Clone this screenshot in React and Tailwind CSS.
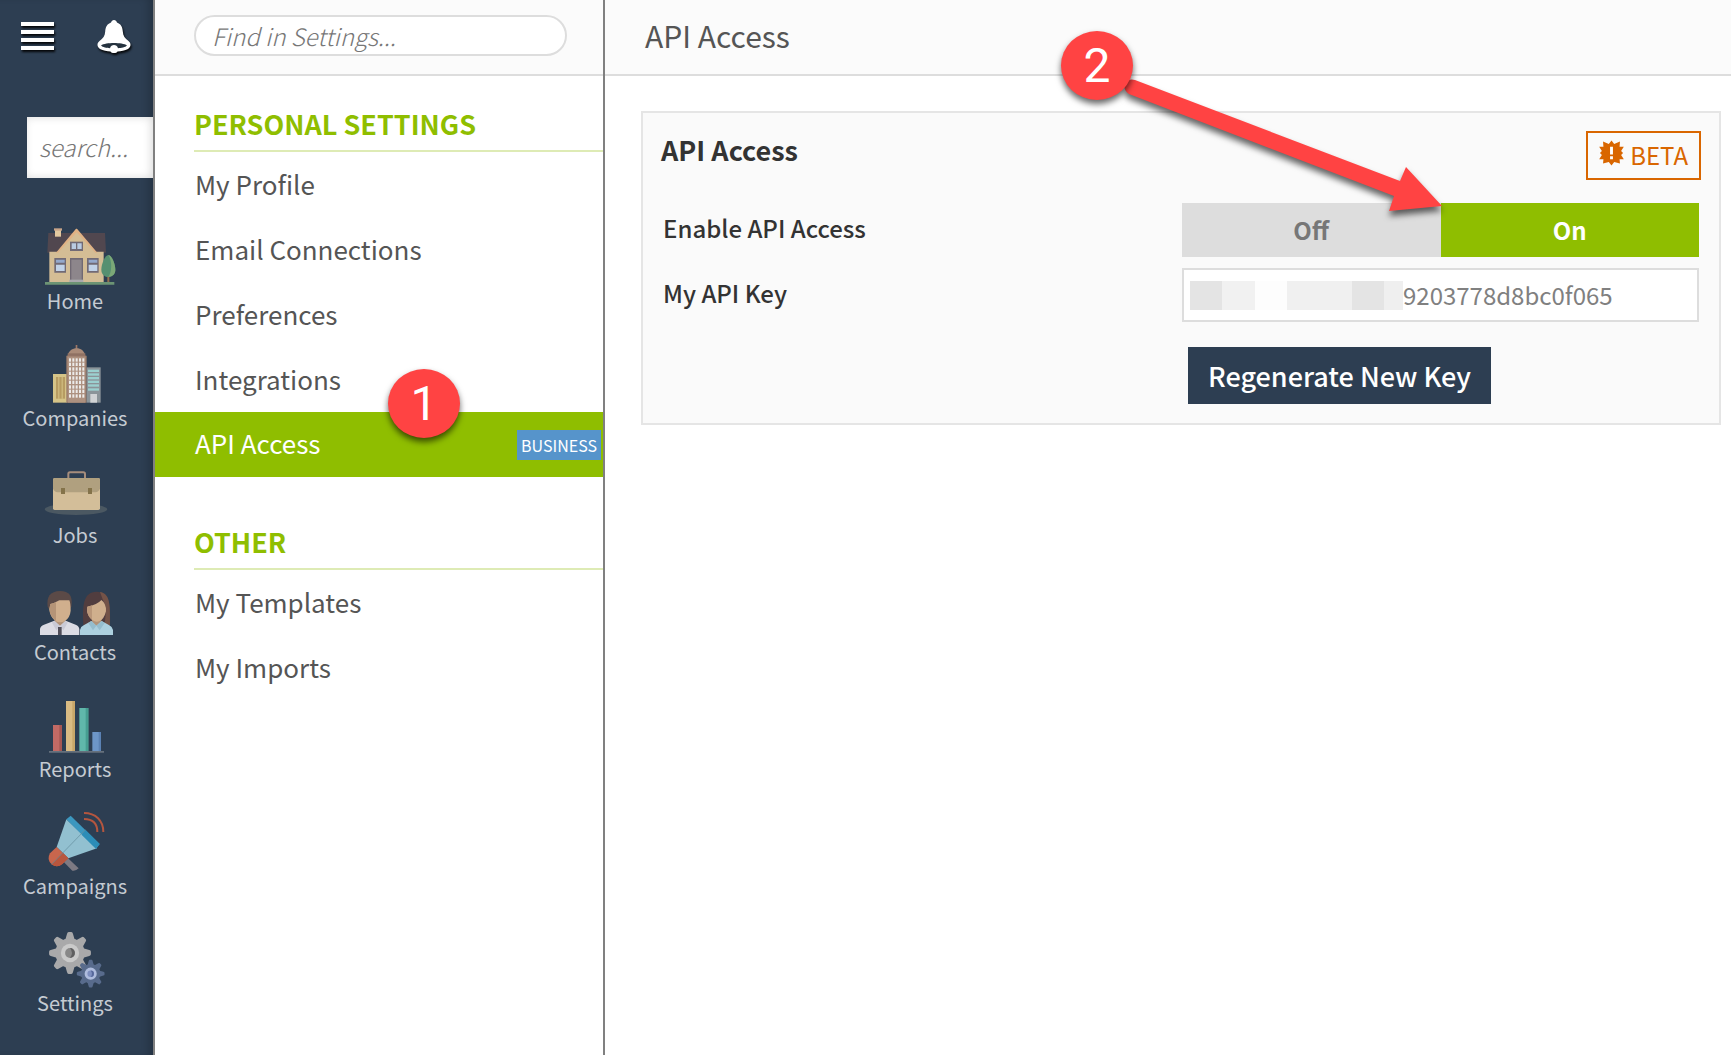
import React from "react";

const nav = [
  { label: "Home", icon: HomeIcon },
  { label: "Companies", icon: CompaniesIcon },
  { label: "Jobs", icon: JobsIcon },
  { label: "Contacts", icon: ContactsIcon },
  { label: "Reports", icon: ReportsIcon },
  { label: "Campaigns", icon: CampaignsIcon },
  { label: "Settings", icon: SettingsIcon },
];

function HomeIcon() {
  return (
    <svg viewBox="99 69 252 192" className="h-16 w-[84px]" aria-hidden="true">
      <path d="M145 99H315L318 158H142Z" fill="#51474f" />
      <path d="M148 155L174 155L230 90L286 155H311V247H148Z" fill="#d4bd95" />
      <path d="M174 158L230 97L286 158H292L231 86H228L168 158Z" fill="#e0b184" />
      <path d="M165 88H183V110H165Z" fill="#e3c9a0" />
      <path d="M162 85H186V92H162Z" fill="#c9a589" />
      <path d="M210 125H249V153H210Z" fill="#716a75" />
      <path d="M215 130H228V147H215ZM232 130H245V147H232Z" fill="#b9cbe2" />
      <path d="M210 174H249V241H210Z" fill="#706973" />
      <path d="M214 179H245V241H214Z" fill="#8d868b" />
      <path d="M163 174H198V218H163ZM261 174H296V218H261Z" fill="#716a75" />
      <path d="M168 179H194V188H168ZM266 179H292V188H266Z" fill="#94a8cb" />
      <path d="M168 194H194V213H168ZM266 194H292V213H266Z" fill="#c1d2e8" />
      <path d="M208 239H250V247H208Z" fill="#a9a9ad" />
      <path d="M322 225H328V250H322Z" fill="#97704f" />
      <path d="M325 165C336 165 347 195 346 211C345 225 335 231 325 231C315 231 304 224 304 209C304 193 315 165 325 165Z" fill="#569071" />
      <path d="M325 165C336 165 347 195 346 211C345 225 335 231 325 231C335 218 338 185 325 165Z" fill="#7ba877" />
      <path d="M135 246H343V254H135Z" fill="#6c9474" />
    </svg>
  );
}

function CompaniesIcon() {
  const rows = [475, 488, 502, 515, 529, 542, 556, 569, 583];
  const cols = [207, 217, 227, 237, 247];
  return (
    <svg viewBox="99 420 252 192" className="h-16 w-[84px]" aria-hidden="true">
      <path d="M159 522H201V608H159Z" fill="#d5c488" />
      <path d="M168 531H195V596H168Z" fill="#b79c62" />
      <path d="M175 531H178V596H175ZM185 531H188V596H185Z" fill="#d5c488" />
      <path d="M227 435H232V448H227Z" fill="#9d7868" />
      <path d="M203 468C205 452 218 445 230 445C242 445 253 452 256 468Z" fill="#a98a78" />
      <path d="M203 460H256V468H203Z" fill="#8f7163" />
      <path d="M199 467H260V608H199Z" fill="#9b7d6c" />
      <path d="M203 470H256V608H203Z" fill="#ad9180" />
      {rows.map((y) => cols.map((x) => <rect key={`${x}-${y}`} x={x} y={y} width="6" height="10" fill="#ecebe9" />))}
      <path d="M260 502H302V608H260Z" fill="#8b9499" />
      {[509, 520, 531, 542, 553, 565].map((y) => (
        <rect key={y} x="264" y={y} width="33" height="7" fill="#9bd0cf" />
      ))}
      <path d="M271 582H291V608H271Z" fill="#d1d3d5" />
    </svg>
  );
}

function JobsIcon() {
  return (
    <svg viewBox="99 51 252 192" className="h-16 w-[84px]" aria-hidden="true">
      <ellipse cx="228" cy="208" rx="94" ry="17" fill="#4b5862" />
      <path d="M205 117V102Q205 97 210 97H250Q255 97 255 102V117" fill="none" stroke="#a68d7c" strokeWidth="6" />
      <rect x="159" y="114" width="141" height="96" rx="5" fill="#d3be99" />
      <path d="M164 114H295Q300 114 300 119V145Q297 156 286 157H173Q162 156 159 145V119Q159 114 164 114Z" fill="#b0a07f" />
      <path d="M183 144H195V162H183ZM264 144H276V162H264Z" fill="#84734a" />
    </svg>
  );
}

function ContactsIcon() {
  return (
    <svg viewBox="99 402 252 192" className="h-16 w-[84px]" aria-hidden="true">
      <path d="M143 500C139 470 150 454 180 453C208 453 219 468 214 500L207 512H150Z" fill="#5b4a47" />
      <path d="M164 528H196V560L180 568L164 558Z" fill="#b1937a" />
      <path d="M151 492Q165 489 178 481H208Q212 490 212 512Q210 532 196 542Q180 551 165 542Q150 530 148 508Z" fill="#d0af8d" />
      <path d="M151 492Q160 490 168 486V543Q150 530 148 508Z" fill="#b59477" />
      <path d="M120 585V567Q121 558 132 554L163 542L180 558L197 542L227 554Q237 558 238 567V585Z" fill="#dcdce4" />
      <path d="M163 542L180 558L169 571L156 548ZM197 542L180 558L190 571L203 548Z" fill="#c9cad6" />
      <path d="M174 561H185V585H174Z" fill="#504e59" />
      <path d="M250 555C247 500 248 455 290 455C329 456 331 490 330 555Z" fill="#513d3f" />
      <path d="M300 456C329 460 331 490 330 555H314Q322 500 308 478Z" fill="#745348" />
      <path d="M276 528H304V560H276Z" fill="#b1937a" />
      <path d="M262 500Q292 494 304 480Q319 490 318 514Q312 538 299 543Q288 548 278 541Q263 528 261 512Z" fill="#d0af8d" />
      <path d="M262 500Q270 499 276 496V540Q263 528 261 512Z" fill="#ba977a" />
      <path d="M240 585V570Q242 560 251 556L274 543L289 557L305 543L328 556Q338 561 339 570V585Z" fill="#acd0df" />
      <path d="M274 543L289 557L279 571L265 549ZM305 543L289 557L299 571L314 549Z" fill="#95bdce" />
    </svg>
  );
}

function ReportsIcon() {
  return (
    <svg viewBox="99 33 252 192" className="h-16 w-[84px]" aria-hidden="true">
      <path d="M159 135H186V213H159Z" fill="#c26a65" />
      <path d="M178 135H186V213H178Z" fill="#a65752" />
      <path d="M198 63H225V213H198Z" fill="#d9bb83" />
      <path d="M217 63H225V213H217Z" fill="#c8a669" />
      <path d="M238 84H265V213H238Z" fill="#60b7ab" />
      <path d="M257 84H265V213H257Z" fill="#469d91" />
      <path d="M277 156H303V213H277Z" fill="#6d96c8" />
      <path d="M296 156H303V213H296Z" fill="#5b82b4" />
      <path d="M147 213H312V218H147Z" fill="#66717d" />
    </svg>
  );
}

function CampaignsIcon() {
  return (
    <svg viewBox="99 384 252 192" className="h-16 w-[84px]" aria-hidden="true">
      <path d="M192 547L204 535L236 565Q228 574 217 572Z" fill="#7d7a83" />
      <path d="M199 418L291 505L205 535L170 501Z" fill="#92c0d0" />
      <path d="M199 418L212 407L299 492L288 506Z" fill="#3c97bf" />
      <path d="M250 458L257 450L299 492L288 506L245 464Z" fill="#2c8db7" />
      <path d="M170 501L205 535L187 552Q171 565 155 553Q139 539 150 520Z" fill="#c8664d" />
      <path d="M188 518L205 535L187 552Q171 565 155 553Z" fill="#b9563d" />
      <path d="M155 553L256 449" stroke="#618b9a" strokeWidth="2" />
      <path d="M252 399C287 399 310 422 310 456M252 417C278 417 292 431 292 456" fill="none" stroke="#b4563f" strokeWidth="6" />
    </svg>
  );
}

function Gear({ cx, cy, scale, fill, ring, hub, core }) {
  return (
    <g transform={`translate(${cx} ${cy}) scale(${scale})`}>
      <circle r="45" fill={fill} />
      {[0, 45, 90, 135, 180, 225, 270, 315].map((angle) => (
        <path
          key={angle}
          transform={`rotate(${angle})`}
          d="M-15 -38L-9 -59Q-8 -64 -4 -64H4Q8 -64 9 -59L15 -38Z"
          fill={fill}
        />
      ))}
      <circle r="28" fill={ring} />
      <circle r="15" fill={hub} />
      <path d="M0 -15A15 15 0 0 1 0 15Q12 0 0 -15Z" fill={core} />
    </g>
  );
}

function SettingsIcon() {
  return (
    <svg viewBox="99 75 252 192" className="h-16 w-[84px]" aria-hidden="true">
      <Gear cx={210} cy={159} scale={0.98} fill="#a9a9aa" ring="#cacaca" hub="#888888" core="#5f5f60" />
      <Gear cx={272} cy={221} scale={0.65} fill="#586b8c" ring="#aebcdd" hub="#7e8fc0" core="#56689b" />
    </svg>
  );
}

function BellIcon() {
  return (
    <svg viewBox="0 0 34 34" className="h-[34px] w-[34px] drop-shadow-[1px_2px_1px_rgba(0,0,0,0.9)]" aria-hidden="true">
      <path
        d="M17 0C18.500 0 19.500 1 20 2.500C24 4 25.500 7 25.800 11.500C26 16 28 18.500 31.500 21C34.500 23.500 34 27 31 29C28 30.800 24 31.300 20.500 31.500C19.500 33.500 14.500 33.500 13.500 31.500C10 31.300 6 30.800 3 29C0 27 -.5 23.500 2.500 21C6 18.500 8 16 8.200 11.500C8.500 7 10 4 14 2.500C14.500 1 15.500 0 17 0Z"
        fill="#fff"
      />
      <path d="M4 25.500C9 22.300 25 22.300 30 25.500C28.500 27.300 24 28 21 28.200C20 23.800 14 23.800 13 28.200C10 28 5.500 27.300 4 25.500Z" fill="#26333f" />
    </svg>
  );
}

function BurstIcon() {
  return (
    <svg viewBox="0 0 26 26" className="mb-1 h-[26px] w-[25px]" aria-hidden="true">
      <path
        d="M13 0L15.800 3.600L21.800 1L21.400 6.400L25.800 6.500L23 10.800L25 13L23 15.200L25.800 19.500L21.400 19.600L21.800 24L15.800 22.400L13 26L10.200 22.400L4.200 24L4.600 19.600L.2 19.500L3 15.200L1 13L3 10.800L.2 6.500L4.600 6.400L4.200 1L10.200 3.600Z"
        fill="#d96600"
      />
      <path d="M11.500 6.500H14.500V14.500H11.500ZM11.500 16.500H14.500V19.500H11.500Z" fill="#fff" />
    </svg>
  );
}

function Step({ children, className }) {
  return (
    <div
      className={`absolute z-20 flex h-[69px] w-[72px] items-center justify-center rounded-[50%] bg-[#ff4343] font-[Roboto,sans-serif] text-5xl text-white shadow-[0_4px_6px_rgba(0,0,0,0.6)] ${className}`}
    >
      {children}
    </div>
  );
}

function SectionTitle({ children, className }) {
  return (
    <h2 className={`ml-[39px] flex items-end border-b-2 border-[#deebb5] pb-1.5 text-[27px] leading-[40px] font-bold text-[#8fbe00] ${className}`}>
      {children}
    </h2>
  );
}

function SettingsLink({ children }) {
  return (
    <a href="#" className="flex h-[65px] items-center pb-0.5 pl-10 text-[26px] text-[#555]">
      {children}
    </a>
  );
}

export default function App() {
  return (
    <div className="flex min-h-screen bg-white font-['Noto_Sans_CJK_SC',sans-serif]">
      <aside className="w-[155px] shrink-0 border-r-2 border-[#808080] bg-[#2d3e52] shadow-[inset_-8px_0_8px_-4px_rgba(0,0,0,0.2)]">
        <div className="flex h-[76px] items-start gap-[43px] pt-5 pl-[21px]">
          <button aria-label="Menu" className="flex w-[33px] flex-col gap-1 pt-0.5 drop-shadow-[1px_2px_1px_rgba(0,0,0,0.9)]">
            <span className="h-1 w-full bg-white" />
            <span className="h-1 w-full bg-white" />
            <span className="h-1 w-full bg-white" />
            <span className="h-1 w-full bg-white" />
          </button>
          <button aria-label="Notifications">
            <BellIcon />
          </button>
        </div>
        <input
          aria-label="Search"
          placeholder="search..."
          className="mt-[41px] ml-[27px] block h-[61px] w-[126px] bg-white pb-0.5 pl-3 text-2xl font-light italic shadow-[inset_-2px_0_8px_rgba(0,0,0,0.15)] outline-none placeholder:text-[#777]"
        />
        <nav className="mt-[45px] w-[150px]">
          {nav.map(({ label, icon: Icon }) => (
            <a key={label} href="#" className="flex h-[117px] flex-col items-center text-[20px] leading-[28px] text-[#c5cbd2]">
              <Icon />
              {label}
            </a>
          ))}
        </nav>
      </aside>

      <section className="relative w-[450px] shrink-0 border-r-2 border-[#808080]">
        <div className="flex h-[76px] items-start border-b-2 border-[#ddd] bg-[#fbfbfb] pt-[15px] pr-9 pl-[39px]">
          <input
            aria-label="Find in Settings"
            placeholder="Find in Settings..."
            className="h-[41px] w-full rounded-full border-2 border-[#ddd] bg-white px-4 text-2xl font-light italic outline-none placeholder:text-[#777]"
          />
        </div>
        <SectionTitle className="h-[76px]">PERSONAL SETTINGS</SectionTitle>
        <SettingsLink>My Profile</SettingsLink>
        <SettingsLink>Email Connections</SettingsLink>
        <SettingsLink>Preferences</SettingsLink>
        <SettingsLink>Integrations</SettingsLink>
        <a href="#" className="flex h-[65px] items-center justify-between bg-[#8fbe00] pr-0.5 pl-10 text-[26px] text-white">
          <span className="pb-1">API Access</span>
          <span className="bg-[#5694cb] px-1 text-base leading-[30px]">BUSINESS</span>
        </a>
        <SectionTitle className="h-[93px]">OTHER</SectionTitle>
        <SettingsLink>My Templates</SettingsLink>
        <SettingsLink>My Imports</SettingsLink>
        <Step className="top-[369px] left-[233px]">1</Step>
      </section>

      <main className="relative min-w-0 flex-1">
        <header className="flex h-[76px] items-center border-b-2 border-[#ddd] bg-[#fbfbfb] pb-1 pl-10">
          <h1 className="text-[30px] text-[#555]">API Access</h1>
        </header>
        <div className="mt-[35px] mr-2.5 ml-9 border-2 border-[#e5e5e5] bg-[#fafafa] pb-[19px]">
          <div className="flex h-[90px] items-start justify-between pt-[18px] pr-[18px] pl-[18px]">
            <h2 className="text-[27px] leading-[38px] font-bold text-[#333]">API Access</h2>
            <span className="flex h-[49px] items-center gap-1.5 border-2 border-[#d96600] px-[11px] pb-0.5 text-2xl text-[#d96600]">
              <BurstIcon />
              BETA
            </span>
          </div>
          <div className="grid grid-cols-2 items-start gap-x-0.5 gap-y-[11px] pr-5 pl-5 text-2xl">
            <div className="leading-[50px] font-medium text-[#333]">Enable API Access</div>
            <div className="flex h-[54px] font-bold">
              <button className="flex-1 bg-[#ddd] text-[#777]">Off</button>
              <button className="flex-1 bg-[#8fbe00] text-white">On</button>
            </div>
            <label htmlFor="api-key" className="leading-[50px] font-medium text-[#333]">
              My API Key
            </label>
            <div className="flex h-[54px] items-center border-2 border-[#ddd] bg-white pl-1.5">
              <div className="flex h-[29px] shrink-0" aria-hidden="true">
                <span className="w-8 bg-[#e4e4e4]" />
                <span className="w-[33px] bg-[#f1f1f1]" />
                <span className="w-8 bg-[#fdfdfd]" />
                <span className="w-[65px] bg-[#f0f0f0]" />
                <span className="w-8 bg-[#e4e4e4]" />
                <span className="w-[19px] bg-[#efefef]" />
              </div>
              <input id="api-key" readOnly value="9203778d8bc0f065" className="min-w-0 flex-1 bg-transparent text-[#808080] outline-none" />
            </div>
            <button className="col-start-2 mt-[14px] ml-1.5 h-[57px] justify-self-start bg-[#2d3e52] px-5 text-[27px] font-medium text-white">
              Regenerate New Key
            </button>
          </div>
        </div>
        <svg viewBox="0 0 340 150" className="absolute top-[70px] left-[511px] z-10 h-[150px] w-[340px] drop-shadow-[0_5px_3px_rgba(0,0,0,0.6)]" aria-hidden="true">
          <path d="M19 10L284 111L290 97L326 136L273 141L278 126L13 24Q7 20 9 14Q12 8 19 10Z" fill="#ff4343" />
        </svg>
        <Step className="top-[31px] left-[456px]">2</Step>
      </main>
    </div>
  );
}
